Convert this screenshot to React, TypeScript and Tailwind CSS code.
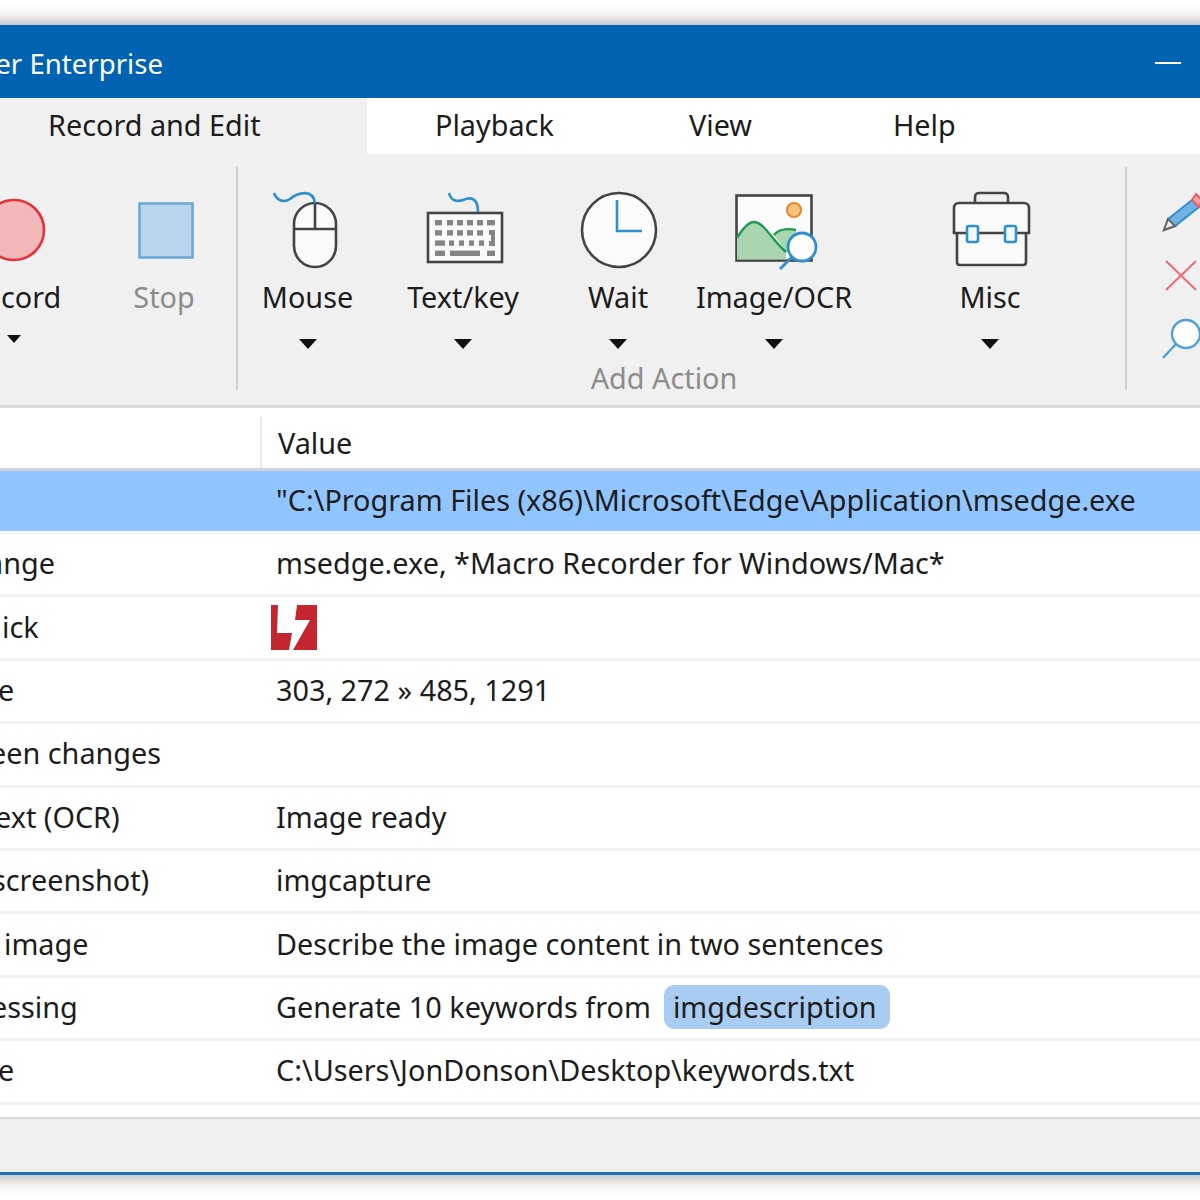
import React from 'react'

const Caret = ({ small }: { small?: boolean }) => (
  <svg width={small ? 14 : 18} height={small ? 8 : 10} viewBox="0 0 18 10" className="block">
    <path d="M0 0H18L9 10Z" fill="#111" />
  </svg>
)

const MouseIcon = () => (
  <svg width="80" height="80" viewBox="0 0 80 80" className="overflow-visible">
    <rect x="26" y="13" width="42" height="64" rx="21" fill="#fafafa" stroke="#444" strokeWidth="2.6" />
    <path d="M47 13V39M26 39H68" stroke="#444" strokeWidth="2.6" fill="none" />
    <path d="M6 3C9 11 16 13 22 9C29 3 45 -2 47 13" stroke="#2f8fce" strokeWidth="2.6" fill="none" />
  </svg>
)

const keyRows = [
  [[12, 7], [24, 6], [34, 6], [44, 6], [54, 6], [64, 8]],
  [[12, 7], [24, 6], [34, 6], [44, 6], [54, 6]],
  [[12, 10], [26, 5], [36, 5], [46, 5], [56, 5]],
  [[12, 10], [27, 30], [64, 8]],
]

const KeyboardIcon = () => (
  <svg width="80" height="80" viewBox="0 0 80 80" className="overflow-visible">
    <rect x="5" y="23" width="74" height="49" fill="#fafafa" stroke="#444" strokeWidth="2.6" />
    {keyRows.map((row, i) =>
      row.map(([x, w], j) => <rect key={`${i}-${j}`} x={x} y={30 + i * 10.2} width={w} height="5.4" fill="#858585" />)
    )}
    <path d="M66 40H72V56H66V51H68V45H66Z" fill="#858585" />
    <path d="M26 3C28 11 34 12 40 10C47 7 55 7 55 22" stroke="#2f8fce" strokeWidth="2.6" fill="none" />
  </svg>
)

const ClockIcon = () => (
  <svg width="80" height="80" viewBox="0 0 80 80" className="overflow-visible">
    <circle cx="41" cy="40" r="37" fill="#fbfbfb" stroke="#444" strokeWidth="2.6" />
    <path d="M39 10V41H64" stroke="#2f8fce" strokeWidth="2.6" fill="none" />
  </svg>
)

const ImageIcon = () => (
  <svg width="80" height="80" viewBox="0 0 80 80" className="overflow-visible">
    <rect x="2.500" y="5.500" width="75" height="65" fill="#fbfbfb" stroke="#444" strokeWidth="2.6" />
    <path d="M3 48C9 38 14 32 20 32C30 32 38 50 52 62V69.500H3Z" fill="#a9d5b0" />
    <path d="M40 45C45 39 52 38 62 40L62 62H52Z" fill="#a9d5b0" />
    <path d="M3 48C9 38 14 32 20 32C30 32 38 50 52 62M40 45C45 39 52 38 62 40" stroke="#1e9a55" strokeWidth="2.4" fill="none" />
    <circle cx="60" cy="20" r="7" fill="#f8c47c" stroke="#e58a2e" strokeWidth="2.2" />
    <circle cx="68" cy="57" r="14" fill="#fff" stroke="#2f8fce" strokeWidth="2.8" />
    <path d="M58 67L46 79" stroke="#2f8fce" strokeWidth="2.8" />
  </svg>
)

const MiscIcon = () => (
  <svg width="80" height="80" viewBox="0 0 80 80" className="overflow-visible">
    <path d="M25 13V7C25 4.500 27 3 29 3H54C56 3 58 4.500 58 7V13" fill="none" stroke="#444" strokeWidth="2.6" />
    <path d="M7 43V72C7 74 8 75 10 75H73C75 75 76 74 76 72V43" fill="#fafafa" stroke="#444" strokeWidth="2.6" />
    <path d="M4 43V18C4 15 6 13 9 13H74C77 13 79 15 79 18V43Z" fill="#fafafa" stroke="#444" strokeWidth="2.6" />
    <rect x="17" y="36" width="11" height="16" rx="2" fill="#f4f8fb" stroke="#2f8fce" strokeWidth="2.6" />
    <rect x="55" y="36" width="11" height="16" rx="2" fill="#f4f8fb" stroke="#2f8fce" strokeWidth="2.6" />
  </svg>
)

const tools = [
  { label: 'Mouse', width: 'w-[139px]', icon: <MouseIcon /> },
  { label: 'Text/key', width: 'w-[172px]', icon: <KeyboardIcon /> },
  { label: 'Wait', width: 'w-[138px]', icon: <ClockIcon /> },
  { label: 'Image/OCR', width: 'w-[174px]', icon: <ImageIcon /> },
  { label: 'Misc', width: 'w-[258px]', icon: <MiscIcon /> },
]

const Logo = () => (
  <svg width="46" height="46" viewBox="0 0 46 46" className="-ml-[5px] mt-[2px] block">
    <path d="M0 0H7L6 28H21L18 45H0ZM26 0H46V45H22L39 15H24Z" fill="#c4262e" />
  </svg>
)

const rows: { label: string; labelClass: string; value: React.ReactNode }[] = [
  { label: 'ange', labelClass: '-ml-[13px] w-[289px]', value: 'msedge.exe, *Macro Recorder for Windows/Mac*' },
  { label: 'ick', labelClass: 'ml-[2px] w-[274px]', value: <Logo /> },
  { label: 'e', labelClass: '-ml-[2px] w-[278px]', value: '303, 272 » 485, 1291' },
  { label: 'een changes', labelClass: '-ml-[10px] w-[286px]', value: '' },
  { label: 'ext (OCR)', labelClass: '-ml-[5px] w-[281px]', value: 'Image ready' },
  { label: 'screenshot)', labelClass: '-ml-[8px] w-[284px]', value: 'imgcapture' },
  { label: 'image', labelClass: 'ml-[4px] w-[272px]', value: 'Describe the image content in two sentences' },
  {
    label: 'essing',
    labelClass: '-ml-[9px] w-[285px]',
    value: (
      <span className="flex items-center">
        Generate 10 keywords from
        <span className="ml-[13px] flex h-[44px] w-[226px] items-center rounded-[10px] bg-[#a9ccf2] pl-[9px]">imgdescription</span>
      </span>
    ),
  },
  { label: 'e', labelClass: '-ml-[2px] w-[278px]', value: 'C:\\Users\\JonDonson\\Desktop\\keywords.txt' },
]

export default function App() {
  return (
    <div className="h-[1200px] w-[1200px] overflow-hidden bg-white pt-[25px] font-['Noto_Sans',sans-serif] text-[28.8px] leading-[40px] text-[#1c1c1c]">
      <div className="-mx-10 shadow-[0_0_18px_rgba(0,0,0,0.45)]">
        <div className="mx-10">
          {/* title bar */}
          <div className="flex h-[73px] items-center justify-between bg-[#0063b1] pt-[2px] text-white">
            <div className="flex w-[163px] justify-end whitespace-nowrap text-[27.6px]">Macro Recorder Enterprise</div>
            <div className="mr-[19px] h-[2px] w-[26px] bg-white" />
          </div>

          {/* tabs */}
          <div className="flex h-[56px] items-center bg-white">
            <div className="flex h-full w-[367px] items-center bg-[#f0f0f0] pb-[2px] pl-[48px]">Record and Edit</div>
            <div className="w-[254px] pb-[2px] pl-[68px]">Playback</div>
            <div className="w-[204px] pb-[2px] pl-[68px]">View</div>
            <div className="pb-[2px] pl-[68px]">Help</div>
          </div>

          {/* ribbon */}
          <div className="flex h-[254px] border-b-[3px] border-[#d9d9d9] bg-[#f0f0f0]">
            <div className="-ml-[56px] flex w-[140px] shrink-0 flex-col items-center pt-[36px]">
              <svg width="80" height="80" viewBox="0 0 80 80">
                <circle cx="40" cy="40" r="30" fill="#f4b7b9" stroke="#e2323c" strokeWidth="2.6" />
              </svg>
              <div className="mt-[7px]">Record</div>
              <div className="mt-[18px]"><Caret small /></div>
            </div>
            <div className="ml-[8px] flex w-[144px] shrink-0 flex-col items-center pt-[36px] text-[#8c8c8c]">
              <svg width="80" height="80" viewBox="0 0 80 80">
                <rect x="15.500" y="13.500" width="53" height="54" fill="#b8d6ee" stroke="#6ea8d6" strokeWidth="2.6" />
              </svg>
              <div className="mt-[7px]">Stop</div>
            </div>
            <div className="mt-[13px] h-[223px] w-[2px] shrink-0 bg-[#cfcfcf]" />
            <div className="flex w-[881px] shrink-0 flex-col pt-[36px]">
              <div className="flex">
                {tools.map((t) => (
                  <div key={t.label} className={`flex shrink-0 flex-col items-center ${t.width}`}>
                    {t.icon}
                    <div className="mt-[7px] whitespace-nowrap">{t.label}</div>
                    <div className="mt-[22px]"><Caret /></div>
                  </div>
                ))}
              </div>
              <div className="mt-[9px] pr-[29px] text-center text-[#8c8c8c]">Add Action</div>
            </div>
            <div className="ml-[6px] mt-[13px] h-[223px] w-[2px] shrink-0 bg-[#cfcfcf]" />
            <div className="flex shrink-0 flex-col pl-[2px] pt-[36px]">
              <svg width="72" height="46" viewBox="0 0 72 46" className="overflow-visible">
                <path d="M35 40L39 29L63 10L70 17L46 36Z" fill="#6fb3e4" stroke="#2f8fce" strokeWidth="2" />
                <path d="M35 40L39 29L46 36Z" fill="#eee" stroke="#666" strokeWidth="2" />
                <path d="M63 10L67 4L73 10L70 17Z" fill="#f4a0a6" stroke="#e8606a" strokeWidth="2" />
              </svg>
              <svg width="72" height="36" viewBox="0 0 72 36" className="mt-[22px]">
                <path d="M37 3L67 32M67 3L37 32" stroke="#ee6a72" strokeWidth="2" fill="none" />
              </svg>
              <svg width="72" height="44" viewBox="0 0 72 44" className="mt-[24px] overflow-visible">
                <circle cx="57" cy="16" r="14" fill="#fff" stroke="#4f9fd8" strokeWidth="2.4" />
                <path d="M47 26L34 40" stroke="#4f9fd8" strokeWidth="2.4" />
              </svg>
            </div>
          </div>

          {/* table */}
          <div className="bg-white pt-[9px]">
            <div className="flex h-[54px] border-b-[3px] border-[#d4d4d4]">
              <div className="w-[262px] border-r-[2px] border-[#e8e8e8]" />
              <div className="flex items-center pl-[16px]">Value</div>
            </div>
            <div className="flex h-[60px] items-center bg-[#91c5ff] pb-[2px] pl-[276px] whitespace-nowrap">
              "C:\Program Files (x86)\Microsoft\Edge\Application\msedge.exe
            </div>
            <div className="h-[3px] bg-[#f4f4f4]" />
            {rows.map((r, i) => (
              <div key={i} className="flex h-[63.4px] items-center border-b-[3px] border-[#f2f2f2] pb-[2px]">
                <div className={`shrink-0 whitespace-nowrap ${r.labelClass}`}>{r.label}</div>
                <div className="whitespace-nowrap">{r.value}</div>
              </div>
            ))}
            <div className="h-[12px]" />
          </div>

          {/* status bar */}
          <div className="h-[58px] border-t-[2px] border-b-[3px] border-t-[#dcdcdc] border-b-[#1e6fb5] bg-[#efefef]" />
        </div>
      </div>
    </div>
  )
}
